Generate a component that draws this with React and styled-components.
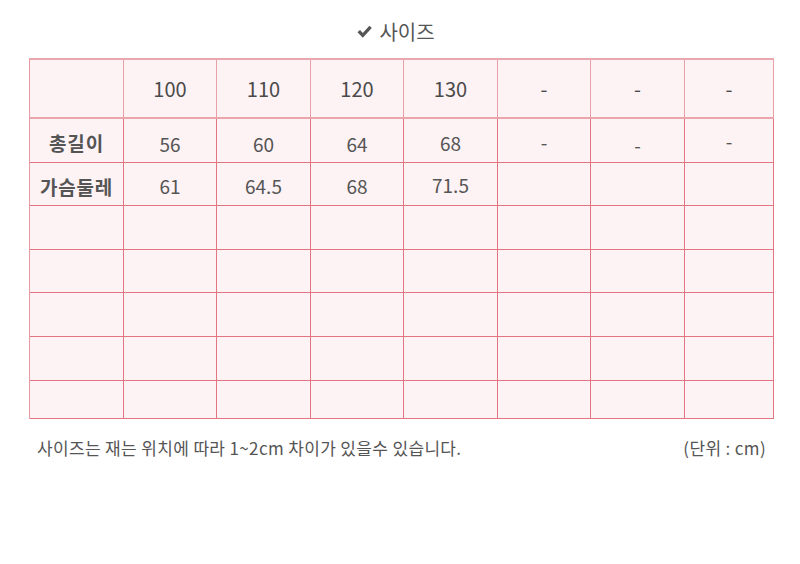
import React from "react";
import styled, { createGlobalStyle } from "styled-components";

const Global = createGlobalStyle`
  html, body { margin: 0; padding: 0; background: #fff; }
  body { font-family: "Noto Sans CJK KR", "Noto Sans", sans-serif; color: #555; }
`;

const Page = styled.div`
  width: 800px;
  height: 564px;
  box-sizing: border-box;
  padding: 16px 27px 0 29px;
  display: flex;
  flex-direction: column;
`;

const Title = styled.h2`
  margin: 0 0 10px 0;
  height: 32px;
  font-size: 20px;
  font-weight: 400;
  color: #555;
  display: flex;
  align-items: center;
  justify-content: center;
  gap: 7px;
  line-height: 1;
  padding-right: 10px;
`;

const Grid = styled.div`
  display: grid;
  grid-template-columns: 94px 93px 94px 93px 94px 93px 94px 89px;
  grid-template-rows: 59px 44px 43px 44px 43px 44px 44px 38px;
  border-left: 1px solid #e59aa4;
  border-top: 2px solid #eaa7af;
  background: #fdf2f4;
  width: 745px;
  box-sizing: border-box;
`;

const Cell = styled.div`
  border-right: 1px solid ${(p) => (p.$head ? "#e8a0a9" : "#e37482")};
  border-bottom: ${(p) => (p.$head ? "2px solid #eaa5ad" : "1px solid #e37482")};
  display: flex;
  align-items: center;
  justify-content: center;
  font-size: ${(p) => (p.$head ? 20 : 19)}px;
  color: ${(p) => (p.$head ? "#4a4a4a" : "#555")};
  font-weight: ${(p) => (p.$bold ? 700 : 400)};
  letter-spacing: ${(p) => (p.$bold ? "0.8px" : "0")};
  padding-top: ${(p) => p.$shift || 0}px;
  box-sizing: border-box;
`;

const Footer = styled.div`
  display: flex;
  justify-content: space-between;
  padding: 16px 7px 0 8px;
  font-size: 17px;
  color: #555;
  letter-spacing: 0.35px;
`;

const Check = () => (
  <svg width="15" height="14" viewBox="0 0 15 14">
    <path d="M0.5 7.2 L3 5 L5.8 8 L12.4 0.8 L14.8 3 L5.8 12.8 Z" fill="#555" />
  </svg>
);

const header = ["", "100", "110", "120", "130", "-", "-", "-"];
const rows = [
  { label: "총길이", vals: ["56", "60", "64", "68", "-", "-", "-"], shifts: [6, 6, 6, 4, 2, 8, -8] },
  { label: "가슴둘레", vals: ["61", "64.5", "68", "71.5", "", "", ""], shifts: [2, 2, 2, 0, 0, 0, 0] },
];

export default function App() {
  return (
    <>
      <Global />
      <Page>
        <Title>
          <Check />
          <span>사이즈</span>
        </Title>
        <Grid>
          {header.map((h, i) => (
            <Cell key={"h" + i} $head>
              {h}
            </Cell>
          ))}
          {rows.map((r, ri) => (
            <React.Fragment key={ri}>
              <Cell $bold $shift={4}>{r.label}</Cell>
              {r.vals.map((v, i) => (
                <Cell key={i} $shift={r.shifts[i]}>
                  {v}
                </Cell>
              ))}
            </React.Fragment>
          ))}
          {Array.from({ length: 5 * 8 }).map((_, i) => (
            <Cell key={"e" + i} />
          ))}
        </Grid>
        <Footer>
          <span>사이즈는 재는 위치에 따라 1~2cm 차이가 있을수 있습니다.</span>
          <span>(단위 : cm)</span>
        </Footer>
      </Page>
    </>
  );
}
